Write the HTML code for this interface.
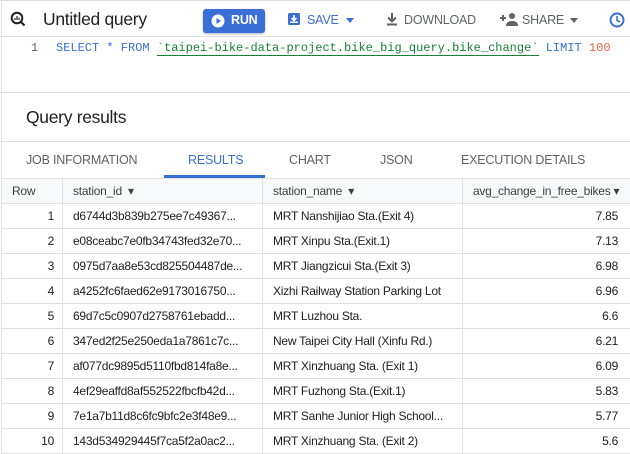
<!DOCTYPE html><html><head><style>
body{margin:0;width:630px;height:452px;overflow:hidden;background:#fff;font-family:"Liberation Sans",Arial,sans-serif;position:relative}
.a{position:absolute}
.lb{position:absolute;left:1px;top:0;bottom:0;width:1px;background:#e0e0e0}
.hl{position:absolute;left:0;right:0;height:1px;background:#e0e0e0}
.tab{position:absolute;top:153px;font-size:12.5px;color:#5f6368;letter-spacing:-.2px}
table{position:absolute;left:1px;top:178px;border-collapse:collapse;table-layout:fixed;width:640px;font-size:12px;color:#202124;letter-spacing:-.25px}
td{height:25px;border:1px solid #e0e0e0;padding:0 10px;white-space:nowrap;overflow:hidden;box-sizing:border-box}
tr.h td{background:#f8f9fa;color:#3c4043;height:25px}
td.n{text-align:right;padding-right:8px}
td.v{text-align:right;padding-right:23px}
.tb{font-size:12.5px;top:13px;letter-spacing:-.2px}
</style></head><body>
<div class="lb"></div>
<div class="hl" style="top:0"></div>
<svg class="a" style="left:10px;top:11px" width="16" height="16" viewBox="0 0 16 16"><circle cx="7" cy="7" r="5.3" fill="none" stroke="#202124" stroke-width="2"/><path d="M11 11l3.5 3.5" stroke="#202124" stroke-width="2.2"/><path d="M5 9V7M7 9V5M9 9V6.5" stroke="#202124" stroke-width="1.2"/></svg>
<div class="a" style="left:43px;top:9px;font-size:17.5px;color:#202124;letter-spacing:-.3px">Untitled query</div>
<div class="a" style="left:203px;top:9px;width:62px;height:24px;background:#3b6fd8;border-radius:3px;box-shadow:0 1px 2px rgba(0,0,0,.3)"></div>
<svg class="a" style="left:211px;top:14px" width="14" height="14"><circle cx="7" cy="7" r="6.5" fill="#fff"/><path d="M5.5 4v6l4.5-3z" fill="#3b6fd8"/></svg>
<div class="a tb" style="left:231px;color:#fff;font-weight:bold">RUN</div>
<svg class="a" style="left:287px;top:12px" width="14" height="14"><rect x="1" y="1" width="12" height="12" rx="1.5" fill="#3b6fd8"/><path d="M7 3v5M4.5 6l2.5 2.5L9.5 6" stroke="#fff" stroke-width="1.6" fill="none"/><rect x="3" y="9.5" width="8" height="1.5" fill="#fff"/></svg>
<div class="a tb" style="left:307px;color:#3b6fd8">SAVE</div>
<div class="a" style="left:346px;top:18px;border:4px solid transparent;border-top:5px solid #3b6fd8"></div>
<svg class="a" style="left:386px;top:12px" width="12" height="14"><path d="M6 1v8M2 5.5l4 4 4-4" stroke="#5f6368" stroke-width="2" fill="none"/><rect x="1" y="11.5" width="10" height="2" fill="#5f6368"/></svg>
<div class="a tb" style="left:404px;color:#5f6368">DOWNLOAD</div>
<svg class="a" style="left:500px;top:12px" width="18" height="14"><path d="M3 3v6M0 6h6" stroke="#5f6368" stroke-width="2"/><circle cx="12" cy="4" r="3" fill="#5f6368"/><path d="M6 14c0-4 3-5 6-5s6 1 6 5z" fill="#5f6368"/></svg>
<div class="a tb" style="left:522px;color:#5f6368">SHARE</div>
<div class="a" style="left:570px;top:18px;border:4px solid transparent;border-top:5px solid #5f6368"></div>
<svg class="a" style="left:609px;top:12px" width="16" height="16"><circle cx="8" cy="8" r="6.5" fill="none" stroke="#3b6fd8" stroke-width="2"/><path d="M8 4v4.5l3 1.5" stroke="#3b6fd8" stroke-width="1.6" fill="none"/></svg>
<div class="hl" style="top:36px"></div>
<div class="a" style="left:31px;top:41px;font:12px 'Liberation Mono',monospace;color:#5f6368">1</div>
<div class="a" style="left:56px;top:41px;font:12px 'Liberation Mono',monospace;color:#3b6fd8;white-space:pre">SELECT * FROM <span style="color:#188038;border-bottom:1px solid #188038">`taipei-bike-data-project.bike_big_query.bike_change`</span> LIMIT <span style="color:#e8674a">100</span></div>
<div class="hl" style="top:92px"></div>
<div class="a" style="left:26px;top:107px;font-size:17.5px;color:#202124;letter-spacing:-.3px">Query results</div>
<div class="hl" style="top:141px"></div>
<div class="tab" style="left:26px">JOB INFORMATION</div>
<div class="tab" style="left:188px;color:#3b6fd8">RESULTS</div>
<div class="tab" style="left:289px">CHART</div>
<div class="tab" style="left:380px">JSON</div>
<div class="tab" style="left:461px">EXECUTION DETAILS</div>
<div class="a" style="left:164px;top:175px;width:101px;height:3px;background:#3b6fd8"></div>
<table>
<colgroup><col style="width:61px"><col style="width:200px"><col style="width:200px"><col style="width:179px"></colgroup>
<tr class="h"><td>Row</td><td>station_id &nbsp;▾</td><td>station_name &nbsp;▾</td><td>avg_change_in_free_bikes ▾</td></tr>
<tr><td class="n">1</td><td>d6744d3b839b275ee7c49367...</td><td>MRT Nanshijiao Sta.(Exit 4)</td><td class="v">7.85</td></tr>
<tr><td class="n">2</td><td>e08ceabc7e0fb34743fed32e70...</td><td>MRT Xinpu Sta.(Exit.1)</td><td class="v">7.13</td></tr>
<tr><td class="n">3</td><td>0975d7aa8e53cd825504487de...</td><td>MRT Jiangzicui Sta.(Exit 3)</td><td class="v">6.98</td></tr>
<tr><td class="n">4</td><td>a4252fc6faed62e9173016750...</td><td>Xizhi Railway Station Parking Lot</td><td class="v">6.96</td></tr>
<tr><td class="n">5</td><td>69d7c5c0907d2758761ebadd...</td><td>MRT Luzhou Sta.</td><td class="v">6.6</td></tr>
<tr><td class="n">6</td><td>347ed2f25e250eda1a7861c7c...</td><td>New Taipei City Hall (Xinfu Rd.)</td><td class="v">6.21</td></tr>
<tr><td class="n">7</td><td>af077dc9895d5110fbd814fa8e...</td><td>MRT Xinzhuang Sta. (Exit 1)</td><td class="v">6.09</td></tr>
<tr><td class="n">8</td><td>4ef29eaffd8af552522fbcfb42d...</td><td>MRT Fuzhong Sta.(Exit.1)</td><td class="v">5.83</td></tr>
<tr><td class="n">9</td><td>7e1a7b11d8c6fc9bfc2e3f48e9...</td><td>MRT Sanhe Junior High School...</td><td class="v">5.77</td></tr>
<tr><td class="n">10</td><td>143d534929445f7ca5f2a0ac2...</td><td>MRT Xinzhuang Sta. (Exit 2)</td><td class="v">5.6</td></tr>
</table>
</body></html>
